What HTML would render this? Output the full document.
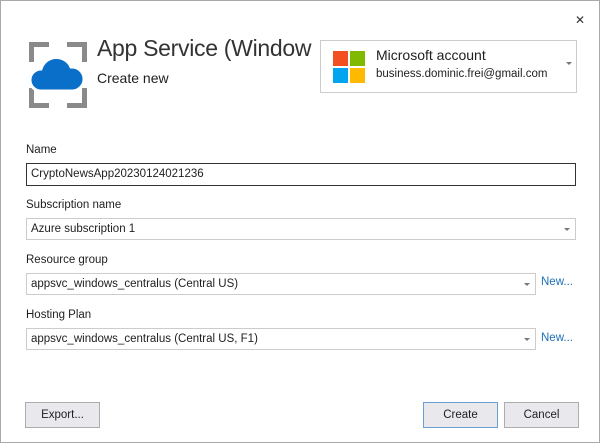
<!DOCTYPE html><html><head><style>
body{margin:0;width:600px;height:443px;overflow:hidden;font-family:"Segoe UI","Liberation Sans",sans-serif;}
.win{position:absolute;left:0;top:0;width:598px;height:441px;border:1px solid #a9a9a9;background:#fff;}
.a{position:absolute;white-space:nowrap;color:#1e1e1e;}
.lbl{font-size:11.5px;}
.box{position:absolute;border:1px solid #ccc;background:#fff;font-size:11.5px;line-height:20px;padding-left:4px;box-sizing:border-box;color:#1e1e1e;}
.arr{position:absolute;right:5px;top:9px;width:0;height:0;border-left:3px solid transparent;border-right:3px solid transparent;border-top:3px solid #777;}
.btn{position:absolute;background:#e9e9ed;border:1px solid #adadad;box-sizing:border-box;font-size:11.5px;text-align:center;color:#1e1e1e;}
.new{position:absolute;font-size:11.5px;color:#1e6fb5;}
</style></head><body><div class="win">
<div class="a" style="left:574px;top:12px;font-size:12px;color:#333;">✕</div>
<svg style="position:absolute;left:28px;top:41px" width="58" height="66" viewBox="0 0 58 66">
<g fill="none" stroke="#8a8a8a" stroke-width="5">
<path d="M2.5 20V2.5H20M38 2.5H55.5V20M55.5 46V63.5H38M20 63.5H2.5V46"/></g>
<path d="M12 49a11 11 0 0 1 0-22a16 16 0 0 1 30-2a12 12 0 0 1 2 24z" fill="#0a6fc9" stroke="#fff" stroke-width="3"/>
</svg>
<div class="a" style="left:96px;top:34px;font-size:23px;color:#333;letter-spacing:-0.3px;">App Service (Window</div>
<div class="a" style="left:96px;top:69px;font-size:14px;">Create new</div>
<div style="position:absolute;left:319px;top:39px;width:255px;height:51px;border:1px solid #ccc;background:#fff;">
<div style="position:absolute;left:12px;top:10px;width:15px;height:15px;background:#f25022"></div>
<div style="position:absolute;left:29px;top:10px;width:15px;height:15px;background:#7fba00"></div>
<div style="position:absolute;left:12px;top:27px;width:15px;height:15px;background:#00a4ef"></div>
<div style="position:absolute;left:29px;top:27px;width:15px;height:15px;background:#ffb900"></div>
<div class="a" style="left:55px;top:6px;font-size:14px;">Microsoft account</div>
<div class="a" style="left:55px;top:27px;font-size:11.5px;">business.dominic.frei@gmail.com</div>
<div class="arr" style="top:21px;right:4px"></div>
</div>
<div class="a lbl" style="left:25px;top:143px;">Name</div>
<div class="box" style="left:25px;top:162px;width:550px;height:23px;border-color:#333;">CryptoNewsApp20230124021236</div>
<div class="a lbl" style="left:25px;top:198px;">Subscription name</div>
<div class="box" style="left:25px;top:217px;width:550px;height:22px;">Azure subscription 1<div class="arr"></div></div>
<div class="a lbl" style="left:25px;top:253px;">Resource group</div>
<div class="box" style="left:25px;top:272px;width:510px;height:22px;">appsvc_windows_centralus (Central US)<div class="arr"></div></div>
<div class="new" style="left:540px;top:275px;">New...</div>
<div class="a lbl" style="left:25px;top:308px;">Hosting Plan</div>
<div class="box" style="left:25px;top:327px;width:510px;height:22px;">appsvc_windows_centralus (Central US, F1)<div class="arr"></div></div>
<div class="new" style="left:540px;top:331px;">New...</div>
<div class="btn" style="left:24px;top:401px;width:75px;height:26px;line-height:24px;">Export...</div>
<div class="btn" style="left:422px;top:401px;width:75px;height:26px;line-height:24px;border-color:#6a9fd4;">Create</div>
<div class="btn" style="left:503px;top:401px;width:75px;height:26px;line-height:24px;">Cancel</div>
</div></body></html>
